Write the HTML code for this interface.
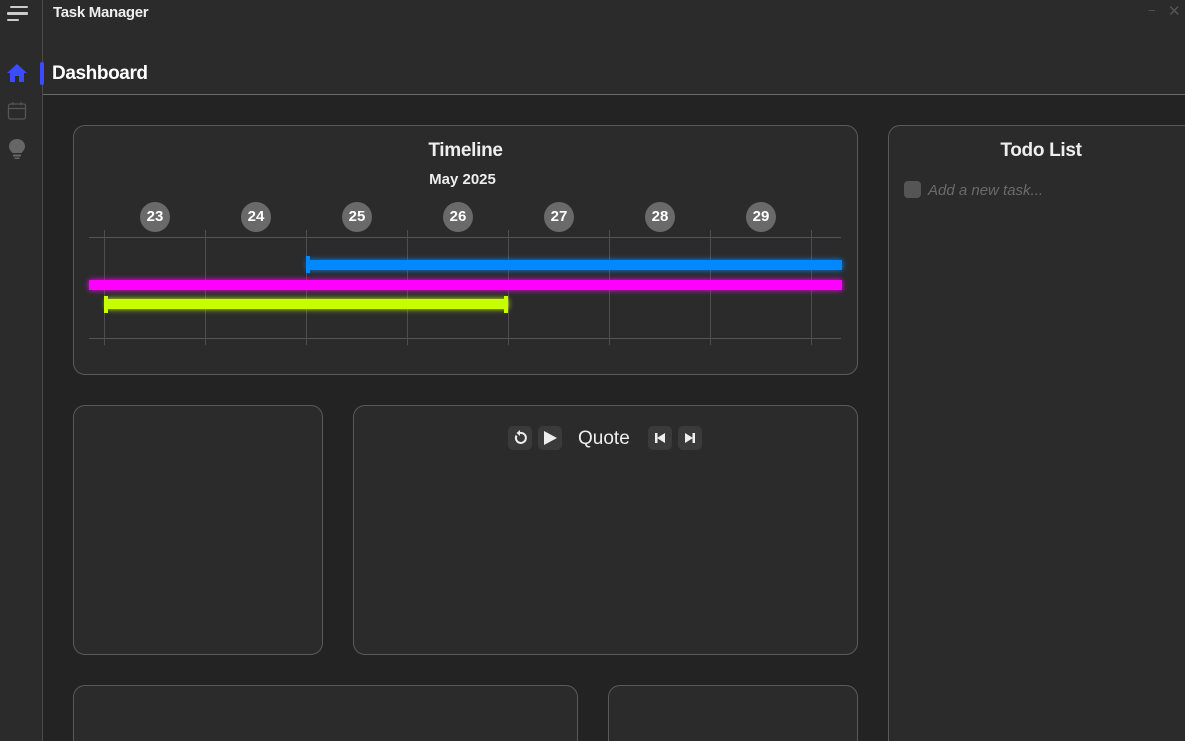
<!DOCTYPE html>
<html><head><meta charset="utf-8"><style>
*{box-sizing:border-box;margin:0;padding:0}
html,body{width:1185px;height:741px;overflow:hidden;background:#232323}
body{font-family:"Liberation Sans",sans-serif;color:#eee;position:relative}
#w{position:absolute;left:0;top:0;width:1185px;height:741px;overflow:hidden}
.abs{position:absolute}
.card{position:absolute;background:#2b2b2b;border:1px solid #5a5a5a;border-radius:12px}
.cb{border-bottom:none;border-bottom-left-radius:0;border-bottom-right-radius:0}
.day{position:absolute;top:202px;width:30px;height:30px;border-radius:50%;background:#6a6a6a;color:#fff;font-weight:bold;font-size:15px;text-align:center;line-height:30px}
.vl{position:absolute;top:230px;width:1px;height:115px;background:#4e4e4e}
.btn{position:absolute;top:426px;width:24px;height:24px;border-radius:5px;background:#3a3a3a}
</style></head><body><div id="w">
<div class="abs" style="left:0;top:0;width:1185px;height:95px;background:#2b2b2b;border-bottom:1px solid #6a6a6a"></div>
<div class="abs" style="left:0;top:0;width:43px;height:741px;background:#2b2b2b;border-right:1px solid #4a4a4a"></div>
<div class="abs" style="left:10px;top:6px;width:18px;height:2px;background:#ccc;border-radius:1px"></div>
<div class="abs" style="left:7px;top:12px;width:21px;height:3px;background:#ccc;border-radius:1px"></div>
<div class="abs" style="left:7px;top:19px;width:12px;height:2px;background:#ccc;border-radius:1px"></div>
<div class="abs" style="left:53px;top:4px;font-size:15px;font-weight:bold;color:#eee;letter-spacing:-0.3px">Task Manager</div>
<div class="abs" style="left:1148px;top:3px;font-size:13px;color:#555">−</div>
<div class="abs" style="left:1168px;top:2px;font-size:15px;color:#555">✕</div>
<svg class="abs" style="left:6px;top:62px" width="22" height="22" viewBox="0 0 22 22"><path d="M11 2 L21 11 H18 V20 H13 V14 H9 V20 H4 V11 H1 Z" fill="#3b4cff"/></svg>
<div class="abs" style="left:40px;top:62px;width:4px;height:23px;background:#3b4cff;border-radius:2px"></div>
<div class="abs" style="left:52px;top:63px;font-size:19px;font-weight:bold;color:#fff;letter-spacing:-0.4px">Dashboard</div>
<svg class="abs" style="left:7px;top:101px" width="20" height="20" viewBox="0 0 20 20"><rect x="1.5" y="3" width="17" height="15" rx="2" fill="none" stroke="#555" stroke-width="1.3"/><line x1="1.5" y1="7.5" x2="18.5" y2="7.5" stroke="#555" stroke-width="1.3"/><line x1="6" y1="1" x2="6" y2="4" stroke="#555" stroke-width="1.3"/><line x1="14" y1="1" x2="14" y2="4" stroke="#555" stroke-width="1.3"/></svg>
<svg class="abs" style="left:8px;top:138px" width="18" height="22" viewBox="0 0 18 22"><path d="M9 1 C4 1 1 4.5 1 8.5 C1 11.5 3 13 4.5 15 H13.5 C15 13 17 11.5 17 8.5 C17 4.5 14 1 9 1 Z" fill="#666"/><rect x="5" y="16.5" width="8" height="2" fill="#666"/><rect x="6.5" y="19.5" width="5" height="1.5" fill="#666"/></svg>

<div class="card" style="left:73px;top:125px;width:785px;height:250px"></div>
<div class="abs" style="left:73px;top:140px;width:785px;text-align:center;font-size:19px;font-weight:bold;letter-spacing:-0.3px">Timeline</div>
<div class="abs" style="left:70px;top:171px;width:785px;text-align:center;font-size:15px;font-weight:bold">May 2025</div>
<div class="day" style="left:140px">23</div><div class="day" style="left:241px">24</div><div class="day" style="left:342px">25</div><div class="day" style="left:443px">26</div><div class="day" style="left:544px">27</div><div class="day" style="left:645px">28</div><div class="day" style="left:746px">29</div>
<div class="abs" style="left:89px;top:237px;width:752px;height:1px;background:#555"></div>
<div class="abs" style="left:89px;top:338px;width:752px;height:1px;background:#555"></div>
<div class="vl" style="left:104px"></div><div class="vl" style="left:205px"></div><div class="vl" style="left:306px"></div><div class="vl" style="left:407px"></div><div class="vl" style="left:508px"></div><div class="vl" style="left:609px"></div><div class="vl" style="left:710px"></div><div class="vl" style="left:811px"></div>
<div class="abs" style="left:307px;top:260px;width:535px;height:10px;background:#0088ff;box-shadow:0 0 6px #0088ff"></div>
<div class="abs" style="left:306px;top:256px;width:4px;height:17px;background:#0088ff"></div>
<div class="abs" style="left:89px;top:280px;width:753px;height:10px;background:#ff00ff;box-shadow:0 0 6px #ff00ff"></div>
<div class="abs" style="left:106px;top:299px;width:402px;height:10px;background:#c8ff00;box-shadow:0 0 6px #c8ff00"></div>
<div class="abs" style="left:104px;top:296px;width:4px;height:17px;background:#c8ff00"></div>
<div class="abs" style="left:504px;top:296px;width:4px;height:17px;background:#c8ff00"></div>

<div class="card" style="left:73px;top:405px;width:250px;height:250px"></div>
<div class="card" style="left:353px;top:405px;width:505px;height:250px"></div>
<div class="btn" style="left:508px"></div><div class="btn" style="left:538px"></div><div class="btn" style="left:648px"></div><div class="btn" style="left:678px"></div>
<svg class="abs" style="left:512px;top:430px" width="16" height="16" viewBox="0 0 16 16"><path d="M4.5 5.5 A5 5 0 1 0 8 3" fill="none" stroke="#eee" stroke-width="2"/><path d="M8 0 L8 6 L4.5 3 Z" fill="#eee"/></svg>
<svg class="abs" style="left:542px;top:430px" width="16" height="16" viewBox="0 0 16 16"><path d="M2 1 L15 8 L2 15 Z" fill="#eee"/></svg>
<div class="abs" style="left:578px;top:428px;font-size:19px;color:#eee">Quote</div>
<svg class="abs" style="left:652px;top:430px" width="16" height="16" viewBox="0 0 16 16"><rect x="3" y="3" width="2.5" height="10" fill="#eee"/><path d="M13 3 L5 8 L13 13 Z" fill="#eee"/></svg>
<svg class="abs" style="left:682px;top:430px" width="16" height="16" viewBox="0 0 16 16"><rect x="10.5" y="3" width="2.5" height="10" fill="#eee"/><path d="M3 3 L11 8 L3 13 Z" fill="#eee"/></svg>

<div class="card cb" style="left:73px;top:685px;width:505px;height:56px"></div>
<div class="card cb" style="left:608px;top:685px;width:250px;height:56px"></div>

<div class="card cb" style="left:888px;top:125px;width:297px;height:616px;border-right:none;border-top-right-radius:0"></div>
<div class="abs" style="left:888px;top:140px;width:306px;text-align:center;font-size:19px;font-weight:bold;letter-spacing:-0.3px">Todo List</div>
<div class="abs" style="left:904px;top:181px;width:17px;height:17px;border-radius:4px;background:#555"></div>
<div class="abs" style="left:928px;top:182px;font-size:15px;font-style:italic;color:#6a6a6a">Add a new task...</div>
</div></body></html>
